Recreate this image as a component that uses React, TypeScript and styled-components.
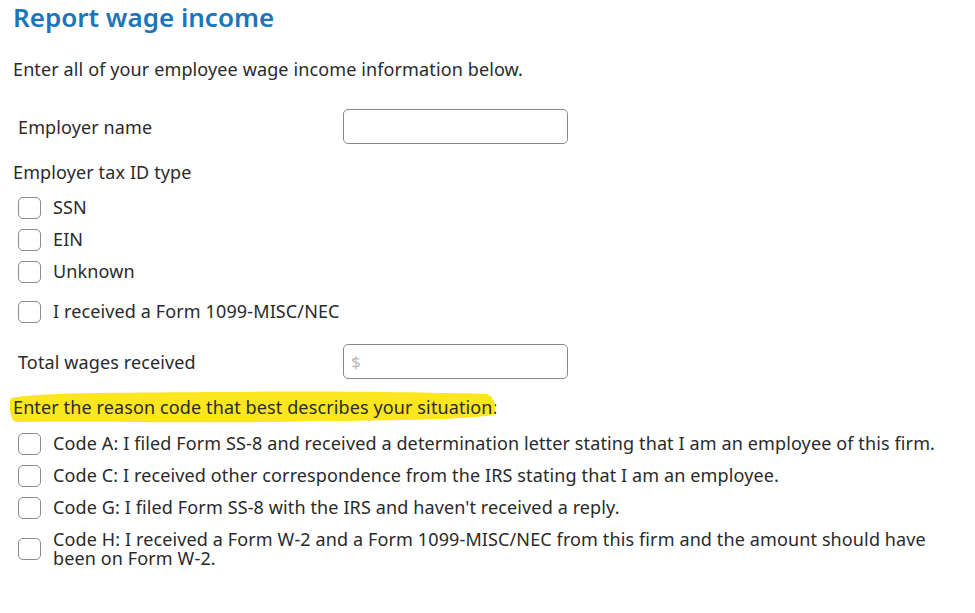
import React from 'react';
import styled, { createGlobalStyle } from 'styled-components';

const GlobalStyle = createGlobalStyle`
    body {
        margin: 0;
        background: #fff;
        font-family: "Noto Sans", Lato, sans-serif;
        color: #2a2a2a;
    }
`

const idTypes = ['SSN', 'EIN', 'Unknown'];

const reasonCodes = [
    'Code A: I filed Form SS-8 and received a determination letter stating that I am an employee of this firm.',
    'Code C: I received other correspondence from the IRS stating that I am an employee.',
    "Code G: I filed Form SS-8 with the IRS and haven't received a reply.",
    'Code H: I received a Form W-2 and a Form 1099-MISC/NEC from this firm and the amount should have been on Form W-2.',
];

const App = (): any => {
    return (
        <>
            <GlobalStyle />
            <Page>
                <Title>Report wage income</Title>
                <Intro>Enter all of your employee wage income information below.</Intro>

                <FieldRow>
                    <FieldLabel>Employer name</FieldLabel>
                    <TextBox type="text" />
                </FieldRow>

                <GroupLabel>Employer tax ID type</GroupLabel>
                <CheckList>
                    {idTypes.map((t) => (
                        <CheckRow key={t}>
                            <Box />
                            <CheckText>{t}</CheckText>
                        </CheckRow>
                    ))}
                </CheckList>
                <CheckRow spaced>
                    <Box />
                    <CheckText>I received a Form 1099-MISC/NEC</CheckText>
                </CheckRow>

                <FieldRow wages>
                    <FieldLabel>Total wages received</FieldLabel>
                    <TextBox type="text" placeholder="$" />
                </FieldRow>

                <Question>
                    <Marker>
                        {/* hand-drawn highlighter stroke */}
                        <MarkerStroke viewBox="0 0 480 34" preserveAspectRatio="none">
                            <path d="M1 8 C 30 2, 110 3, 200 2 C 300 1, 400 2, 472 4 C 481 7, 482 18, 479 25 C 440 31, 360 30, 260 32 C 160 33, 80 31, 6 32 C -1 30, -1 14, 1 8 Z" />
                        </MarkerStroke>
                        <span>Enter the reason code that best describes your situation</span>
                    </Marker>:
                </Question>

                <CheckList codes>
                    {reasonCodes.map((c) => (
                        <CheckRow key={c}>
                            <Box />
                            <CheckText>{c}</CheckText>
                        </CheckRow>
                    ))}
                </CheckList>
            </Page>
        </>
    );
}

const Page = styled.div`
    padding: 0 13px;
    width: 949px;
    font-size: 18px;
    letter-spacing: 0.12px;
`
const Title = styled.h1`
    margin: 0;
    padding-top: 1px;
    font-size: 26px;
    line-height: 32px;
    font-weight: 600;
    letter-spacing: 0;
    color: #1b75bb;
`
const Intro = styled.p`
    margin: 22px 0 0;
    line-height: 28px;
`
const FieldRow = styled.div<{ wages?: boolean }>`
    display: flex;
    align-items: center;
    margin-top: ${(p) => (p.wages ? '20px' : '26px')};
    padding-left: 5px;
`
const FieldLabel = styled.div`
    width: 325px;
`
const TextBox = styled.input`
    width: 225px;
    height: 35px;
    box-sizing: border-box;
    border: 1px solid #8a8a8a;
    border-radius: 5px;
    padding: 0 7px;
    font-family: inherit;
    font-size: 17px;
    &::placeholder {
        color: #b9b9b9;
    }
`
const GroupLabel = styled.div`
    margin-top: 15px;
    line-height: 26px;
`
const CheckList = styled.div<{ codes?: boolean }>`
    display: flex;
    flex-direction: column;
    gap: 7px;
    margin-top: ${(p) => (p.codes ? '10px' : '10px')};
`
const CheckRow = styled.div<{ spaced?: boolean }>`
    display: flex;
    align-items: center;
    gap: 12px;
    padding-left: 5px;
    margin-top: ${(p) => (p.spaced ? '15px' : '0')};
`
const Box = styled.span`
    flex: none;
    width: 23px;
    height: 22px;
    box-sizing: border-box;
    border: 1px solid #8c8c8c;
    border-radius: 5px;
    background: #fff;
`
const CheckText = styled.span`
    line-height: 19px;
    padding: 3px 0;
`
const Question = styled.div`
    margin-top: 14px;
    line-height: 28px;
`
const Marker = styled.span`
    position: relative;
    display: inline-block;
    z-index: 0;
`
const MarkerStroke = styled.svg`
    position: absolute;
    left: -3px;
    top: -3px;
    width: calc(100% + 5px);
    height: 34px;
    z-index: -1;
    fill: #fbe61f;
`

export default App;
